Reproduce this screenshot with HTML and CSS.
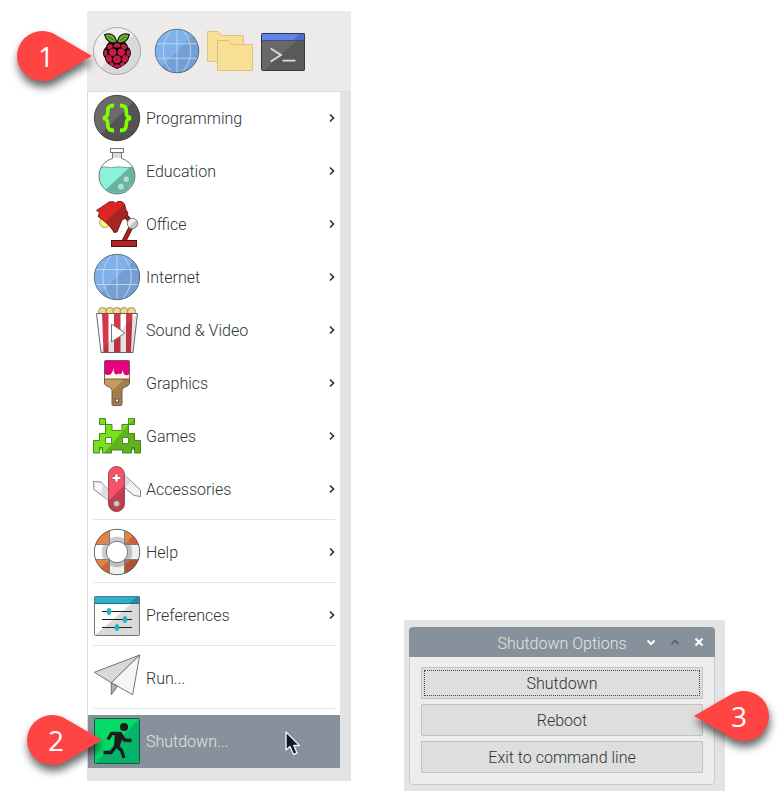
FILE: index.html
```html
<!DOCTYPE html>
<html lang="en">
<head>
<meta charset="utf-8">
<title>Shutdown menu</title>
<link rel="stylesheet" href="styles.css">
</head>
<body>
<svg class="defs" width="0" height="0" aria-hidden="true">
  <defs>
    <symbol id="globe" viewBox="0 0 48 48">
      <circle cx="24" cy="24" r="22.7" fill="#80b1ea"/>
      <path d="M40.100 7.900A22.7 22.7 0 0 1 7.900 40.100Z" fill="#759fd3"/>
      <path d="M24 1.5V46.500M3 16.500H45M3 31.500H45M18 2.500C7 16 7 32 18 45.500M30 2.500C41 16 41 32 30 45.500" fill="none" stroke="#b8d5f5" stroke-width="1"/>
      <circle cx="24" cy="24" r="22.7" fill="none" stroke="#46566b" stroke-width=".8"/>
    </symbol>
    <symbol id="chevron" viewBox="0 0 8 10">
      <path d="M2 1.500L5.500 5L2 8.500" fill="none" stroke="#333" stroke-width="1.700"/>
    </symbol>
    <symbol id="pin" viewBox="0 0 76 52">
      <path d="M76 26L40 5C35 2 31 1 26 1A25 25 0 0 0 26 51C31 51 35 50 40 47Z" fill="#ff4444"/>
    </symbol>
  </defs>
</svg>

<main class="desktop">
  <section class="panel">
    <nav class="taskbar" aria-label="Launchers">
      <button class="launcher launcher-menu" aria-label="Menu">
        <svg class="icon" viewBox="0 0 48 48">
          <circle cx="24" cy="24" r="23.500" fill="#f1f1f1"/>
          <path d="M40.700 7.300A23.500 23.500 0 0 1 7.300 40.700Z" fill="#d9d9d9"/>
          <circle cx="24" cy="24" r="23.500" fill="none" stroke="#a9a9a9"/>
          <path d="M24 14C29 13 34 15 35 20C39 23 38.500 29 36 31C36 35 31 38.500 28 40L24 42L20 40C17 38.500 12 35 12 31C9.500 29 9 23 13 20C14 15 19 13 24 14Z" fill="#0b0508"/>
          <path d="M23.500 15.500C17 17 13 13.500 11.700 7.500C17 6 22.500 7 23.500 15.500ZM24.500 15.500C31 17 35 13.500 36.300 7.500C31 6 25.500 7 24.500 15.500Z" fill="#75ad3d" stroke="#10210c" stroke-width="1.200"/>
          <path d="M15 9.500L21 13.500M33 9.500L27 13.500" stroke="#284b17" stroke-width=".8"/>
          <g fill="#c51b46">
            <ellipse cx="17" cy="19.700" rx="3" ry="2.300" transform="rotate(-35 17 19.700)"/>
            <ellipse cx="31" cy="19.700" rx="3" ry="2.300" transform="rotate(35 31 19.700)"/>
            <ellipse cx="24" cy="18.500" rx="3.200" ry="2.200"/>
            <circle cx="19.800" cy="25.200" r="3.700"/><circle cx="28.200" cy="25.200" r="3.700"/>
            <ellipse cx="12.700" cy="26" rx="1.600" ry="3.300"/><ellipse cx="35.300" cy="26" rx="1.600" ry="3.300"/>
            <circle cx="24" cy="32.300" r="3.900"/>
            <ellipse cx="16" cy="31.700" rx="3" ry="3.600" transform="rotate(-20 16 31.700)"/>
            <ellipse cx="32" cy="31.700" rx="3" ry="3.600" transform="rotate(20 32 31.700)"/>
            <ellipse cx="18.800" cy="37" rx="2.600" ry="1.700" transform="rotate(35 18.800 37)"/>
            <ellipse cx="29.200" cy="37" rx="2.600" ry="1.700" transform="rotate(-35 29.200 37)"/>
            <ellipse cx="24" cy="39" rx="3" ry="1.700"/>
          </g>
        </svg>
        <span class="pin pin-menu"><svg class="pin-shape"><use href="#pin"/></svg><span class="pin-number">1</span></span>
      </button>
      <button class="launcher" aria-label="Web browser">
        <svg class="icon" viewBox="-1 -1 50 50"><use href="#globe" width="48" height="48"/></svg>
      </button>
      <button class="launcher" aria-label="File manager">
        <svg class="icon" viewBox="0 0 48 48" fill="#f7df95" stroke="#dcc27e">
          <path d="M1.500 4.500H12L15.500 8.500H37.500V34.500H1.500Z"/>
          <path d="M11.500 13.500H22L25.500 17.500H46.500V43.500H11.500Z"/>
        </svg>
      </button>
      <button class="launcher" aria-label="Terminal">
        <svg class="icon" viewBox="0 0 48 48">
          <rect x="2.500" y="6.500" width="43" height="37" rx="1" fill="#686868"/>
          <path d="M45.500 6.500V43.500H5Z" fill="#595959"/>
          <path d="M2.500 6.500H45.500V13.500H2.500Z" fill="#6383ec"/>
          <path d="M45.500 6.500V13.500H34L41 6.500Z" fill="#506bc8"/>
          <path d="M2.500 13.500H45.500" stroke="#444d6c"/>
          <rect x="2.500" y="6.500" width="43" height="37" rx="1" fill="none" stroke="#333845"/>
          <path d="M11.700 21.500L22 28L11.700 34.500M23.500 33.700H36.500" fill="none" stroke="#dedede" stroke-width="1.800"/>
        </svg>
      </button>
    </nav>

    <div class="menu-area">
      <ul class="menu">
        <li><button class="item">
          <svg class="icon" viewBox="0 0 48 48">
            <circle cx="24" cy="24" r="22.700" fill="#6b6b6b"/>
            <path d="M40.100 7.900A22.700 22.700 0 0 1 7.900 40.100Z" fill="#535353"/>
            <circle cx="24" cy="24" r="22.700" fill="none" stroke="#333" stroke-width=".8"/>
            <path d="M21 11.500C16 11.500 14.800 13 14.800 17C14.800 21.500 14 23.500 10 24C14 24.500 14.800 26.500 14.800 31C14.800 35 16 36.500 21 36.500M27 11.500C32 11.500 33.200 13 33.200 17C33.200 21.500 34 23.500 38 24C34 24.500 33.200 26.500 33.200 31C33.200 35 32 36.500 27 36.500" fill="none" stroke="#80ff00" stroke-width="3.800"/>
          </svg>
          <span class="label">Programming</span><svg class="chevron"><use href="#chevron"/></svg></button></li>
        <li><button class="item">
          <svg class="icon" viewBox="0 0 48 48">
            <path d="M19.500 5.500V11.500A18 18 0 1 0 28.500 11.500V5.500Z" fill="#fff"/>
            <path d="M20 6H28V11H20Z" fill="#ddd"/>
            <path d="M8 21C12 18.500 16 21.500 20 20.500S28 20 32 20.500S37 20 40 21A18 18 0 1 1 8 21Z" fill="#8df0d8"/>
            <path d="M36.500 20.500H40A18 18 0 0 1 13 42.500Z" fill="#69b49f"/>
            <path d="M8 21C12 18.500 16 21.500 20 20.500S28 20 32 20.500S37 20 40 21" fill="none" stroke="#559686" stroke-width=".8"/>
            <circle cx="33.300" cy="32.300" r="2.700" fill="#b5dccf"/><circle cx="28" cy="39.700" r="3" fill="#b5dccf"/>
            <path d="M19.500 5.500V11.500A18 18 0 1 0 28.500 11.500V5.500" fill="none" stroke="#666" stroke-width=".9"/>
            <rect x="17.500" y="1.500" width="13" height="4" fill="#fff" stroke="#666" stroke-width=".9"/>
          </svg>
          <span class="label">Education</span><svg class="chevron"><use href="#chevron"/></svg></button></li>
        <li><button class="item">
          <svg class="icon" viewBox="0 0 48 48">
            <path d="M32 15L39.500 24L31 41" fill="none" stroke="#511" stroke-width="4.600"/>
            <path d="M32 15L39.500 24L31 41" fill="none" stroke="#a72424" stroke-width="3.200"/>
            <circle cx="11.700" cy="22.300" r="5.200" fill="#fff37d" stroke="#8b8444" stroke-width=".8"/>
            <path d="M3.500 10.500L16 2L20 1.500L22.500 3L25 1.500L29 1.500L31.500 4L33 10L35 13L32.500 18L29 20L24 32L21 32.500C18 26 11 21 5 16.500L6.500 12.500Z" fill="#dc2525"/>
            <path d="M31.500 4L33 10L35 13L32.500 18L29 20L24 32L21 32.500C19 28.500 16 25 12.500 22Z" fill="#a72424"/>
            <path d="M3.500 10.500L16 2L20 1.500L22.500 3L25 1.500L29 1.500L31.500 4L33 10L35 13L32.500 18L29 20L24 32L21 32.500C18 26 11 21 5 16.500L6.500 12.500Z" fill="none" stroke="#611" stroke-width=".8"/>
            <circle cx="39.500" cy="23.500" r="5.200" fill="#efefef"/>
            <path d="M43.200 19.800A5.200 5.200 0 0 1 35.800 27.200Z" fill="#c4c4c4"/>
            <circle cx="39.500" cy="23.500" r="5.200" fill="none" stroke="#666" stroke-width=".8"/>
            <rect x="18.500" y="40.500" width="25" height="6" fill="#b22525" stroke="#511"/>
          </svg>
          <span class="label">Office</span><svg class="chevron"><use href="#chevron"/></svg></button></li>
        <li><button class="item">
          <svg class="icon"><use href="#globe"/></svg>
          <span class="label">Internet</span><svg class="chevron"><use href="#chevron"/></svg></button></li>
        <li><button class="item">
          <svg class="icon" viewBox="0 0 48 48">
            <g fill="#f7d889" stroke="#8c7647" stroke-width=".8"><circle cx="9.500" cy="5.500" r="4"/><circle cx="17" cy="5.500" r="4"/><circle cx="24" cy="5.500" r="4"/><circle cx="31" cy="5.500" r="4"/><circle cx="38.500" cy="5.500" r="4"/></g>
            <path d="M3.500 7.500H44.500L40 46.500H8Z" fill="#fff"/>
            <path d="M9 7.500H15.500V46.500H10.500ZM21 7.500H27.500V46.500H21ZM33 7.500H39.500L38 46.500H33Z" fill="#d23a4b"/>
            <path d="M44.500 7.500L40 46.500H8L7.700 44Z" fill="#000" opacity=".11"/>
            <path d="M3.500 7.500H44.500L40 46.500H8Z" fill="none" stroke="#555" stroke-width=".9"/>
            <path d="M18.500 18L32 27L18.500 36Z" fill="#fff" stroke="#777"/>
          </svg>
          <span class="label">Sound &amp; Video</span><svg class="chevron"><use href="#chevron"/></svg></button></li>
        <li><button class="item">
          <svg class="icon" viewBox="0 0 48 48">
            <path d="M11.500 1.500H36.500V20H11.500Z" fill="#fff7e2"/>
            <path d="M11.500 2.500Q11.500 1.500 12.500 1.500H35.500Q36.500 1.500 36.500 2.500V15C32 18 30 15 29.700 10C29.500 15 27.500 16 25.500 14.500C22 17 20.700 14 20.300 8C20 16 16 17 11.500 15Z" fill="#e6007e"/>
            <path d="M11.500 20H36.500V24C36.500 28 29 27 29 32V45Q29 46.500 27.500 46.500H20.500Q19 46.500 19 45V32C19 27 11.500 28 11.500 24Z" fill="#c69a61"/>
            <path d="M31 20H36.500V24C36.500 28 29 27 29 32V45Q29 46.500 27.500 46.500H20.500Q19 46.500 19 45V32Z" fill="#a47d4d"/>
            <path d="M11.500 20H36.500M11.500 2.500Q11.500 1.500 12.500 1.500H35.500Q36.500 1.500 36.500 2.500V24C36.500 28 29 27 29 32V45Q29 46.500 27.500 46.500H20.500Q19 46.500 19 45V32C19 27 11.500 28 11.500 24Z" fill="none" stroke="#674f3c" stroke-width=".9"/>
            <rect x="22.500" y="40" width="3" height="3" fill="#fff" stroke="#555"/>
          </svg>
          <span class="label">Graphics</span><svg class="chevron"><use href="#chevron"/></svg></button></li>
        <li><button class="item">
          <svg class="icon" viewBox="0 3 48 48">
            <path d="M6.500 9.500H12.500V15.500H19V21.500H29V15.500H35.500V9.500H41.500V15.500H35.500V24.500H41.500V31.500H47.500V44H41.500V41H38.500V44H29.500V41H18.500V44H9.500V41H6.500V44H.5V31.500H6.500V24.500H12.500V15.500H6.500Z" fill="#76e11e"/>
            <path d="M41.500 9.500V15.500H35.500V24.500H41.500V31.500H47.500V44H41.500V41H38.500V44H29.500V41H18.500V44H11L35.500 15.500Z" fill="#5fb31e"/>
            <path d="M6.500 9.500H12.500V15.500H19V21.500H29V15.500H35.500V9.500H41.500V15.500H35.500V24.500H41.500V31.500H47.500V44H41.500V38.500H38.500V44H29.500V41H18.500V44H9.500V38.500H6.500V44H.5V31.500H6.500V24.500H12.500V15.500H6.500Z" fill="none" stroke="#3f7c18" stroke-width=".9"/>
            <path d="M12.500 28.500H18.500V34.500H12.500ZM29.500 28.500H35.500V34.500H29.500Z" fill="#fff" stroke="#4b861f" stroke-width=".9"/>
          </svg>
          <span class="label">Games</span><svg class="chevron"><use href="#chevron"/></svg></button></li>
        <li><button class="item">
          <svg class="icon" viewBox="0 0 48 48">
            <path d="M.5 16.500L8 17L24 33V42L1 24.500Z" fill="#f7f7f7" stroke="#777" stroke-width=".9"/>
            <path d="M10 19L15.500 24.500V36L8 29Z" fill="#ddd"/>
            <path d="M25 4L47.500 25V31.500L41 30.500L25 17Z" fill="#f4f4f4" stroke="#777" stroke-width=".9"/>
            <path d="M31.500 10L38.500 17L32 23Z" fill="#ddd"/>
            <rect x="15.500" y="1.500" width="16" height="45" rx="8" fill="#fa5068"/>
            <path d="M31.500 20V38.500A8 8 0 0 1 15.500 38.500V36Z" fill="#c23d52"/>
            <rect x="15.500" y="1.500" width="16" height="45" rx="8" fill="none" stroke="#7c4950" stroke-width=".9"/>
            <path d="M22 8.800H25V11.500H27.800V14.500H25V17.300H22V14.500H19.200V11.500H22Z" fill="#fff" stroke="#a34050" stroke-width=".7"/>
            <circle cx="23.500" cy="38.700" r="3" fill="#ccc" stroke="#777" stroke-width=".8"/>
          </svg>
          <span class="label">Accessories</span><svg class="chevron"><use href="#chevron"/></svg></button></li>
        <li class="divider" role="separator"></li>
        <li><button class="item">
          <svg class="icon" viewBox="0 0 48 48">
            <circle cx="24" cy="24" r="16.800" fill="none" stroke="#fff" stroke-width="11.900"/>
            <path d="M16.500 2.500V16.500H2.500A22.700 22.700 0 0 1 16.500 2.500ZM31.500 2.500V16.500H45.500A22.700 22.700 0 0 0 31.500 2.500ZM16.500 45.500V31.500H2.500A22.700 22.700 0 0 0 16.500 45.500Z" fill="#e18640"/>
            <path d="M40.100 7.900A22.700 22.700 0 0 1 45.500 16.500H31.500ZM7.900 40.100L16.500 31.500V45.500A22.700 22.700 0 0 1 7.900 40.100Z" fill="#df673e"/>
            <path d="M31.500 45.500V31.500H45.500A22.700 22.700 0 0 1 31.500 45.500Z" fill="#b75932"/>
            <circle cx="24" cy="24" r="13" fill="none" stroke="#999" stroke-opacity=".5" stroke-width="4.500"/>
            <path d="M40.100 7.900A22.700 22.700 0 0 1 7.900 40.100L16.500 31.500A10.700 10.700 0 0 0 31.500 16.500Z" fill="#000" opacity=".06"/>
            <path d="M16.500 2.500V16.500H2.500M31.500 2.500V16.500H45.500M16.500 45.500V31.500H2.500M31.500 45.500V31.500H45.500" fill="none" stroke="#777" stroke-width=".9"/>
            <circle cx="24" cy="24" r="22.700" fill="none" stroke="#555" stroke-width=".9"/>
            <circle cx="24" cy="24" r="10.700" fill="#fff" stroke="#666" stroke-width=".9"/>
          </svg>
          <span class="label">Help</span><svg class="chevron"><use href="#chevron"/></svg></button></li>
        <li class="divider" role="separator"></li>
        <li><button class="item">
          <svg class="icon" viewBox="0 0 48 48">
            <rect x="1.500" y="5.500" width="45" height="39" rx="1" fill="#fff"/>
            <path d="M46.500 5.500V44.500H1.500Z" fill="#d9d9d9"/>
            <path d="M1.500 5.500H46.500V12.500H1.500Z" fill="#2eb0cc"/>
            <path d="M46.500 5.500V12.500H36L44 5.500Z" fill="#268ca3"/>
            <path d="M1.500 12.500H46.500" stroke="#286b7b"/>
            <rect x="1.500" y="5.500" width="45" height="39" rx="1" fill="none" stroke="#666" stroke-width=".9"/>
            <path d="M9 20.500H39M9 28.500H39M9 36.500H39" stroke="#222"/>
            <g fill="#2eb0cc"><ellipse cx="16" cy="20.500" rx="2.300" ry="3.500"/><ellipse cx="32" cy="28.500" rx="2.300" ry="3.500"/><ellipse cx="24" cy="36.500" rx="2.300" ry="3.500"/></g>
          </svg>
          <span class="label">Preferences</span><svg class="chevron"><use href="#chevron"/></svg></button></li>
        <li class="divider" role="separator"></li>
        <li><button class="item">
          <svg class="icon" viewBox="0 0 48 48" stroke="#666" stroke-width=".9" stroke-linejoin="round">
            <path d="M1.300 18.300L46.700 1L18.300 28.700Z" fill="#d9d9d9"/>
            <path d="M46.700 1L39.700 40.700L18.300 28.700Z" fill="#f5f5f5"/>
            <path d="M18.300 28.700V40.700L24.500 32.300Z" fill="#b0b0b0"/>
          </svg>
          <span class="label">Run...</span></button></li>
        <li class="divider" role="separator"></li>
        <li><button class="item item-active">
          <svg class="icon" viewBox="0 0 48 48">
            <rect x="1.500" y="1.500" width="45" height="45" rx="1" fill="#05dc68"/>
            <path d="M46.500 1.500V46.500H1.500Z" fill="#05b36b"/>
            <rect x="1.500" y="1.500" width="45" height="45" rx="1" fill="none" stroke="#17593a"/>
            <circle cx="31" cy="10" r="4.100" fill="#1c1c1c"/>
            <path d="M15 22.500L18.500 16.500H27L31.500 23L38.500 23.500M24 28L18 35.500H10.500M23 28L28.500 33.500L31 41" fill="none" stroke="#1c1c1c" stroke-width="3.300" stroke-linecap="butt" stroke-linejoin="round"/>
            <path d="M22 15H28.500L30 19L26.500 30L21 29Z" fill="#1c1c1c"/>
          </svg>
          <span class="label">Shutdown...</span>
          <span class="pin pin-shutdown"><svg class="pin-shape"><use href="#pin"/></svg><span class="pin-number">2</span></span>
          <svg class="cursor" viewBox="0 0 16 26"><path d="M1 1V19L5 15.500L8.500 23.500L12 22L8.800 14.500H14.500Z" fill="#10142d" stroke="#eee" stroke-width="1.400" stroke-linejoin="round"/></svg>
        </button></li>
      </ul>
    </div>
  </section>

  <section class="dialog-area">
    <div class="dialog" role="dialog" aria-labelledby="dialog-title">
      <header class="titlebar">
        <h1 class="title" id="dialog-title">Shutdown Options</h1>
        <div class="window-controls">
          <button class="control" aria-label="Minimise"><svg viewBox="0 0 12 12"><path d="M2.500 4.500L6 8L9.500 4.500" fill="none" stroke="#fff" stroke-width="2"/></svg></button>
          <button class="control" aria-label="Maximise"><svg viewBox="0 0 12 12"><path d="M2.500 8L6 4.500L9.500 8" fill="none" stroke="#5f666d" stroke-width="2"/></svg></button>
          <button class="control" aria-label="Close"><svg viewBox="0 0 12 12"><path d="M2.500 2.500L9.500 9.500M9.500 2.500L2.500 9.500" stroke="#fff" stroke-width="2.200"/></svg></button>
        </div>
      </header>
      <div class="options">
        <button class="option option-focused">Shutdown</button>
        <button class="option">Reboot
          <span class="pin pin-reboot"><svg class="pin-shape pin-shape-left"><use href="#pin"/></svg><span class="pin-number">3</span></span>
        </button>
        <button class="option">Exit to command line</button>
      </div>
    </div>
  </section>
</main>
</body>
</html>
```
FILE: styles.css
```css
* {
  box-sizing: border-box;
}

body {
  margin: 0;
  background: #fff;
  color: #2e3436;
  font: 300 16px/20px Roboto, "Liberation Sans", sans-serif;
}

button {
  margin: 0;
  padding: 0;
  border: 0;
  background: none;
  color: inherit;
  font: inherit;
}

svg {
  display: block;
}

.defs {
  position: absolute;
}

.desktop {
  display: grid;
  grid-template-columns: minmax(0, 264fr) minmax(0, 321fr);
  column-gap: 53px;
  align-items: end;
  padding: 11px 53px 15px 87px;
}

/* Menu panel */

.panel {
  margin-bottom: 10px;
  background: #e3e3e3;
}

.taskbar {
  display: flex;
  gap: 5px;
  padding: 16px 6px;
  background: #edebe9;
}

.launcher {
  position: relative;
}

.launcher-menu {
  margin-right: 7px;
}

.icon {
  flex: none;
  width: 48px;
  height: 48px;
}

.menu-area {
  padding: 0 11px 13px 0;
}

.menu {
  margin: 0;
  padding: 0;
  border-top: 1px solid #d9d9d9;
  border-left: 1px solid #d9d9d9;
  background: #fff;
  list-style: none;
}

.item {
  position: relative;
  display: flex;
  gap: 5px;
  align-items: center;
  width: 100%;
  padding: 2px 4px 3px 5px;
  text-align: left;
}

.item-active {
  background: #87919b;
  color: #e4e4e4;
}

.label {
  flex: 1;
  padding-top: 2px;
}

.chevron {
  width: 8px;
  height: 10px;
}

.divider {
  height: 10px;
  padding: 3px 5px 0;
}

.divider::before {
  display: block;
  height: 1px;
  background: #e4e4e4;
  content: "";
}

.cursor {
  position: absolute;
  top: 16px;
  right: 39px;
  width: 16px;
  height: 26px;
}

/* Numbered callouts */

.pin {
  position: absolute;
  z-index: 1;
  width: 76px;
  height: 52px;
  color: #fff;
  font: 500 28px/52px "Open Sans", sans-serif;
  text-align: center;
}

.pin-shape {
  width: 76px;
  height: 52px;
  filter: drop-shadow(1px 6px 4px rgba(0, 0, 0, 0.6));
}

.pin-shape-left {
  transform: scaleX(-1);
  filter: drop-shadow(-1px 6px 4px rgba(0, 0, 0, 0.6));
}

.pin-number {
  position: absolute;
  top: 0;
  left: 4px;
  width: 52px;
}

.pin-menu {
  top: 3px;
  right: 49px;
}

.pin-shutdown {
  top: -1px;
  right: 238px;
}

.pin-reboot {
  top: -15px;
  right: -68px;
}

.pin-reboot .pin-number {
  right: 5px;
  left: auto;
}

/* Shutdown dialog */

.dialog-area {
  padding: 7px 10px 6px 5px;
  background: #e4e4e4;
}

.titlebar {
  display: grid;
  grid-template-columns: 1fr auto 1fr;
  align-items: center;
  height: 30px;
  padding: 0 4px;
  border-radius: 4px 4px 0 0;
  background: #87919b;
  color: #e4e4e4;
}

.title {
  grid-column: 2;
  margin: 0;
  padding-top: 3px;
  font: inherit;
}

.window-controls {
  display: flex;
  justify-content: flex-end;
}

.control {
  display: grid;
  width: 24px;
  height: 24px;
  place-items: center;
}

.control svg {
  width: 12px;
  height: 12px;
}

.options {
  display: grid;
  gap: 5px;
  padding: 10px 11px 11px;
  border: 1px solid #cbcbcb;
  border-top: 0;
  border-radius: 0 0 4px 4px;
  background: #ededed;
}

.option {
  position: relative;
  height: 32px;
  padding-top: 2px;
  border: 1px solid #c3c3c3;
  border-radius: 1px;
  background: #dedede;
}

.option-focused {
  outline: 1px dotted #444;
  outline-offset: -4px;
}
```
